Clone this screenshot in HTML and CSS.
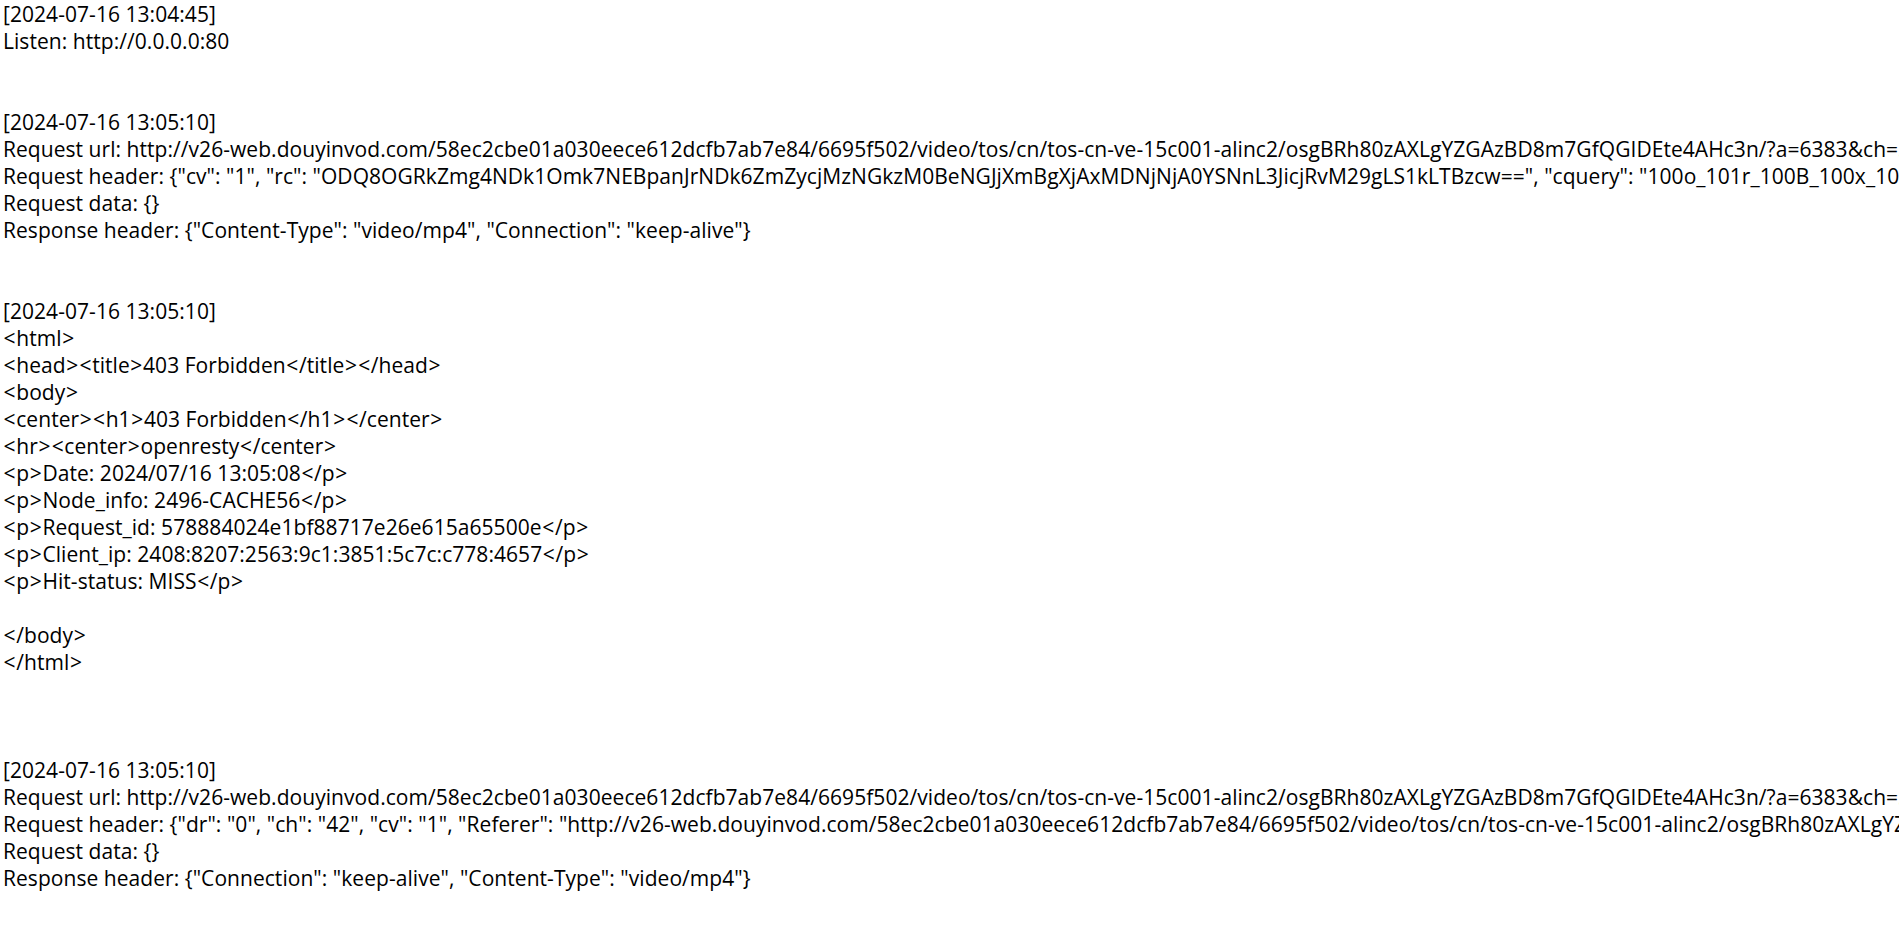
FILE: index.html
```html
<!DOCTYPE html>
<html>
<head>
<meta charset="utf-8">
<link rel="stylesheet" href="styles.css">
</head>
<body>
<pre class="log">[2024-07-16 13:04:45]
Listen: http://0.0.0.0:80


[2024-07-16 13:05:10]
Request url: http://v26-web.douyinvod.com/58ec2cbe01a030eece612dcfb7ab7e84/6695f502/video/tos/cn/tos-cn-ve-15c001-alinc2/osgBRh80zAXLgYZGAzBD8m7GfQGIDEte4AHc3n/?a=6383&amp;ch=5&amp;cr=3&amp;dr=0&amp;lr=all&amp;cd=0%7C0%7C0%7C3&amp;cv=1&amp;br=1024
Request header: {"cv": "1", "rc": "ODQ8OGRkZmg4NDk1Omk7NEBpanJrNDk6ZmZycjMzNGkzM0BeNGJjXmBgXjAxMDNjNjA0YSNnL3JicjRvM29gLS1kLTBzcw==", "cquery": "100o_101r_100B_100x_100z_100a_100K", "ch": "5"}
Request data: {}
Response header: {"Content-Type": "video/mp4", "Connection": "keep-alive"}


[2024-07-16 13:05:10]
<span class="br">&lt;</span>html<span class="br">&gt;</span>
<span class="br">&lt;</span>head<span class="br">&gt;</span><span class="br">&lt;</span>title<span class="br">&gt;</span>403 Forbidden<span class="br">&lt;</span>/title<span class="br">&gt;</span><span class="br">&lt;</span>/head<span class="br">&gt;</span>
<span class="br">&lt;</span>body<span class="br">&gt;</span>
<span class="br">&lt;</span>center<span class="br">&gt;</span><span class="br">&lt;</span>h1<span class="br">&gt;</span>403 Forbidden<span class="br">&lt;</span>/h1<span class="br">&gt;</span><span class="br">&lt;</span>/center<span class="br">&gt;</span>
<span class="br">&lt;</span>hr<span class="br">&gt;</span><span class="br">&lt;</span>center<span class="br">&gt;</span>openresty<span class="br">&lt;</span>/center<span class="br">&gt;</span>
<span class="br">&lt;</span>p<span class="br">&gt;</span>Date: 2024/07/16 13:05:08<span class="br">&lt;</span>/p<span class="br">&gt;</span>
<span class="br">&lt;</span>p<span class="br">&gt;</span>Node_info: 2496-CACHE56<span class="br">&lt;</span>/p<span class="br">&gt;</span>
<span class="br">&lt;</span>p<span class="br">&gt;</span>Request_id: 578884024e1bf88717e26e615a65500e<span class="br">&lt;</span>/p<span class="br">&gt;</span>
<span class="br">&lt;</span>p<span class="br">&gt;</span>Client_ip: 2408:8207:2563:9c1:3851:5c7c:c778:4657<span class="br">&lt;</span>/p<span class="br">&gt;</span>
<span class="br">&lt;</span>p<span class="br">&gt;</span>Hit-status: MISS<span class="br">&lt;</span>/p<span class="br">&gt;</span>

<span class="br">&lt;</span>/body<span class="br">&gt;</span>
<span class="br">&lt;</span>/html<span class="br">&gt;</span>



[2024-07-16 13:05:10]
Request url: http://v26-web.douyinvod.com/58ec2cbe01a030eece612dcfb7ab7e84/6695f502/video/tos/cn/tos-cn-ve-15c001-alinc2/osgBRh80zAXLgYZGAzBD8m7GfQGIDEte4AHc3n/?a=6383&amp;ch=5&amp;cr=3&amp;dr=0&amp;lr=all&amp;cd=0%7C0%7C0%7C3&amp;cv=1&amp;br=1024
Request header: {"dr": "0", "ch": "42", "cv": "1", "Referer": "http://v26-web.douyinvod.com/58ec2cbe01a030eece612dcfb7ab7e84/6695f502/video/tos/cn/tos-cn-ve-15c001-alinc2/osgBRh80zAXLgYZGAzBD8m7GfQGIDEte4AHc3n/"}
Request data: {}
Response header: {"Connection": "keep-alive", "Content-Type": "video/mp4"}
</pre>
</body>
</html>
```

FILE: styles.css
```css
html, body {
  margin: 0;
  padding: 0;
  background: #ffffff;
  overflow: hidden;
}

.log {
  margin: 0;
  padding: 1px 0 0 3px;
  font-family: "Open Sans", "Noto Sans", sans-serif;
  font-size: 21px;
  line-height: 27px;
  letter-spacing: 0.05px;
  color: #000000;
  white-space: pre;
}

.br {
  padding: 0 0.6px;
}
```
